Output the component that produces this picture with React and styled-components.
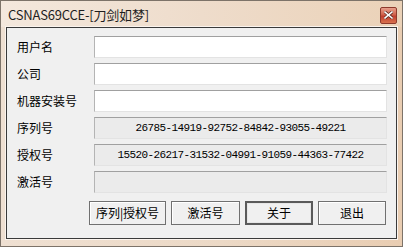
import React, { useState } from 'react';
import styled, { createGlobalStyle } from 'styled-components';

const Global = createGlobalStyle`
	html, body {
		margin: 0;
		padding: 0;
		background: #ffffff;
	}
	* {
		box-sizing: border-box;
	}
`;

const Window = styled.div`
	width: 403px;
	height: 247px;
	display: flex;
	flex-direction: column;
	border: 1px solid #7d7369;
	background: linear-gradient(90deg, #efe0d2 0%, #ecd9c6 55%, #e9cdb2 100%);
	font-family: "Noto Sans CJK SC", "Noto Sans", sans-serif;
	color: #000;
`;

const TitleBar = styled.div`
	height: 26px;
	display: flex;
	align-items: center;
	justify-content: space-between;
	padding: 1px 5px 0 7px;
	background: linear-gradient(90deg, #f4e8dd 0%, #eedccb 50%, #ebd2b8 100%);
`;

const Title = styled.span`
	font-size: 13px;
	line-height: 16px;
	color: #1e1e1e;
	letter-spacing: -0.2px;
`;

const CloseBtn = styled.div`
	width: 17px;
	height: 17px;
	margin-top: 1px;
	border: 1px solid #8e3a2c;
	border-radius: 2px;
	background: linear-gradient(180deg, #e8a08c 0%, #d0604a 45%, #c04030 55%, #d8704c 100%);
	display: flex;
	align-items: center;
	justify-content: center;
`;

const Frame = styled.div`
	flex: 1;
	display: flex;
	padding: 0 5px 7px 5px;
`;

const Client = styled.div`
	flex: 1;
	border: 1px solid #3a3a3a;
	box-shadow: 0 0 0 1px #fbf4ee;
	background: #f0f0f0;
	padding: 8px 9px 0 10px;
	display: flex;
	flex-direction: column;
`;

const Rows = styled.div`
	display: flex;
	flex-direction: column;
	gap: 5px;
`;

const Row = styled.div`
	display: flex;
	align-items: center;
	height: 22px;
`;

const Label = styled.label`
	width: 77px;
	font-size: 12px;
	line-height: 14px;
`;

const Field = styled.input`
	flex: 1;
	height: 22px;
	margin: 0;
	padding: 0 3px;
	border: 1px solid #e3e3e3;
	border-top-color: #a0a0a0;
	border-left-color: #b4b4b4;
	background: ${p => (p.readOnly ? '#ebebeb' : '#ffffff')};
	font-family: "Liberation Mono", monospace;
	font-size: 11px;
	letter-spacing: -0.6px;
	color: #000;
	text-align: center;
	outline: none;
`;

const ButtonBar = styled.div`
	display: flex;
	justify-content: flex-end;
	gap: 5px;
	margin-top: 8px;
	padding-right: 1px;
`;

const Button = styled.button`
	width: ${p => p.$w}px;
	height: 24px;
	margin: 0;
	padding: 0;
	background: #f0f0f0;
	border: ${p => (p.$default ? '2px solid #5a5a5a' : '1px solid #707070')};
	box-shadow: ${p => (p.$default ? 'inset 0 0 0 1px #e6e6e6' : 'inset 1px 1px 0 #ffffff')};
	font-family: "Noto Sans CJK SC", sans-serif;
	font-size: 12px;
	line-height: 14px;
	color: #000;
`;

const fields = [
	{ label: '用户名', value: '', readOnly: false },
	{ label: '公司', value: '', readOnly: false },
	{ label: '机器安装号', value: '', readOnly: false },
	{ label: '序列号', value: '26785-14919-92752-84842-93055-49221', readOnly: true },
	{ label: '授权号', value: '15520-26217-31532-04991-91059-44363-77422', readOnly: true },
	{ label: '激活号', value: '', readOnly: true },
];

const App = () => {
	const [values, setValues] = useState(fields.map(f => f.value));
	return (
		<>
			<Global />
			<Window>
				<TitleBar>
					<Title>CSNAS69CCE-[刀剑如梦]</Title>
					<CloseBtn>
						<svg width="9" height="8" viewBox="0 0 9 8">
							<path d="M1 1 L8 7 M8 1 L1 7" stroke="#5a2a20" strokeWidth="3" strokeLinecap="square" />
							<path d="M1 1 L8 7 M8 1 L1 7" stroke="#ffffff" strokeWidth="1.6" strokeLinecap="square" />
						</svg>
					</CloseBtn>
				</TitleBar>
				<Frame>
					<Client>
						<Rows>
							{fields.map((f, i) => (
								<Row key={f.label}>
									<Label>{f.label}</Label>
									<Field
										readOnly={f.readOnly}
										value={values[i]}
										onChange={(e) => setValues(values.map((v, j) => (j === i ? e.target.value : v)))}
									/>
								</Row>
							))}
						</Rows>
						<ButtonBar>
							<Button $w={77}>序列|授权号</Button>
							<Button $w={69}>激活号</Button>
							<Button $w={68} $default>关于</Button>
							<Button $w={68}>退出</Button>
						</ButtonBar>
					</Client>
				</Frame>
			</Window>
		</>
	);
};

export default App;
